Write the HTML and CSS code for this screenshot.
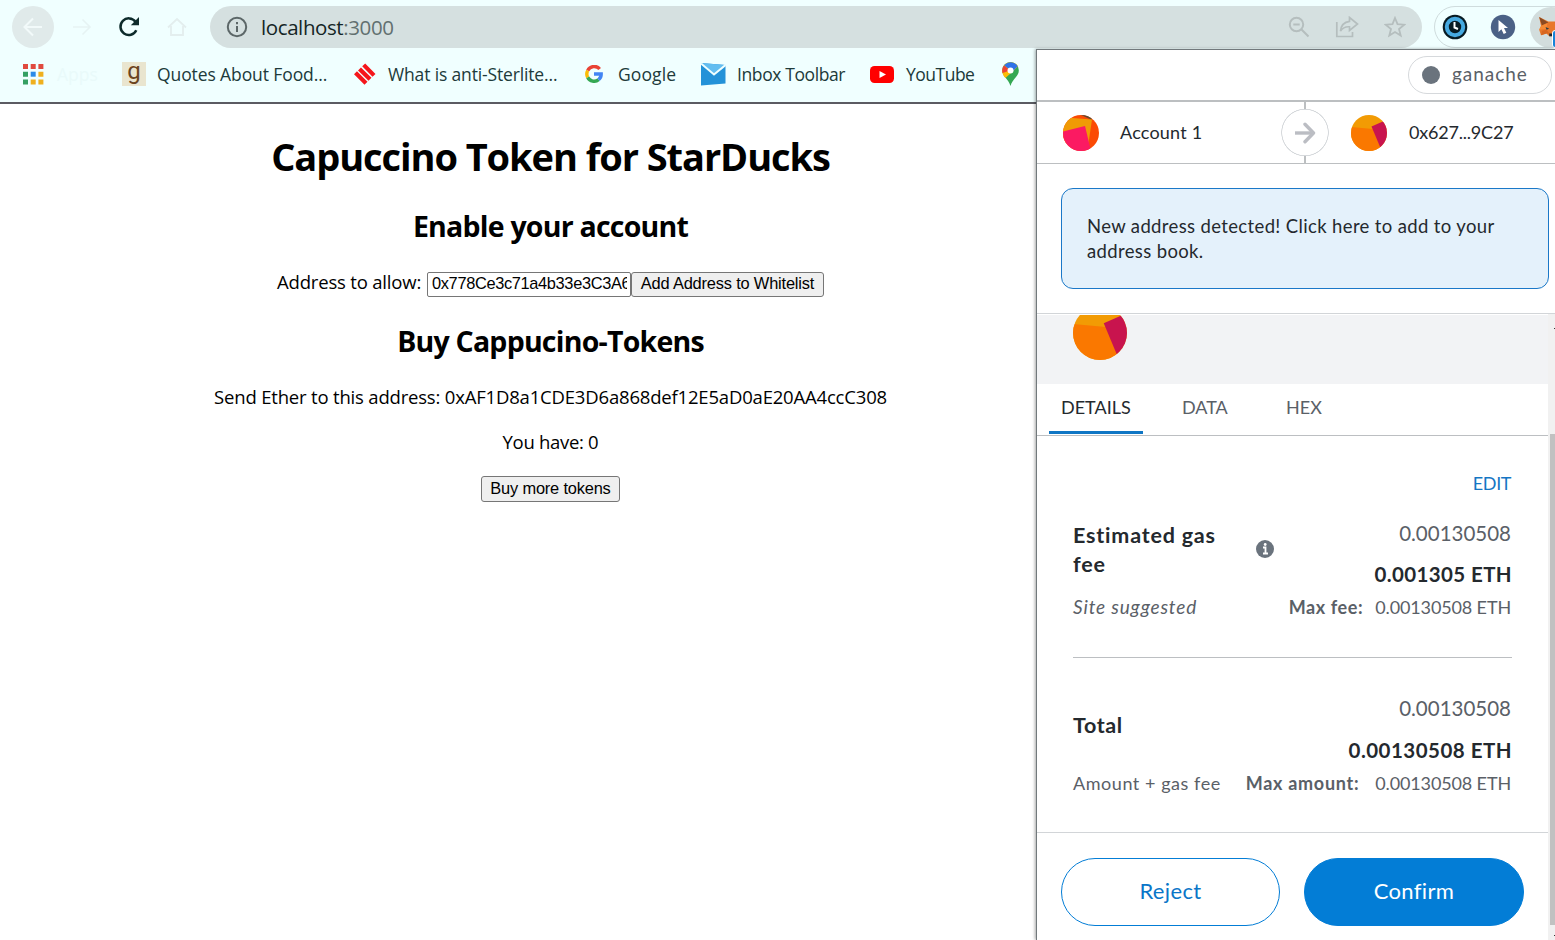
FILE: index.html
```html
<!DOCTYPE html>
<html lang="en">
<head>
<meta charset="utf-8">
<title>Capuccino Token for StarDucks</title>
<link rel="stylesheet" href="styles.css">
</head>
<body>
<div class="window">
  <header class="toolbar">
    <span class="nav-back"><svg width="20" height="20" viewBox="0 0 20 20" fill="none" stroke="#f2fafa" stroke-width="2"><path d="M19 10H2M10 1.500L1.500 10L10 18.500"/></svg></span>
    <svg class="nav-forward" width="20" height="20" viewBox="0 0 20 20" fill="none" stroke="#e6f3f3" stroke-width="1.600"><path d="M1 10H18M10.500 2.500L18 10L10.500 17.500"/></svg>
    <svg class="nav-reload" width="22" height="22" viewBox="0 0 22 22"><path d="M18.300 14.200A8.300 8.300 0 1 1 17.500 5.800" fill="none" stroke="#0d2b2b" stroke-width="2.500"/><path d="M21 1V9.200H12.800Z" fill="#0d2b2b"/></svg>
    <svg class="nav-home" width="20" height="20" viewBox="0 0 20 20" fill="none" stroke="#e3eeee" stroke-width="1.800"><path d="M1 10.500L10 2L19 10.500M4 9V18H16V9"/></svg>
    <div class="omnibox">
      <svg width="22" height="22" viewBox="0 0 22 22"><circle cx="11" cy="11" r="9.200" fill="none" stroke="#5c6768" stroke-width="2"/><path d="M11 10V16M11 6V8.200" stroke="#5c6768" stroke-width="2"/></svg>
      <span class="url">localhost<span class="port">:3000</span></span>
      <div class="omni-actions">
        <svg width="22" height="22" viewBox="0 0 22 22" fill="none" stroke="#b5bebe" stroke-width="2"><circle cx="8.500" cy="8.500" r="6.700"/><path d="M5.300 8.500H11.700M13.500 13.500L20.500 20.500"/></svg>
        <svg width="24" height="22" viewBox="0 0 24 22" fill="none" stroke="#b5bebe" stroke-width="1.700"><path d="M1.800 6V20.500H17.500V16"/><path d="M14.500 1.500L22.500 8L14.500 14.500V10.800C10.500 10.500 7.500 12 5.500 15C6 9.500 9 6 14.500 5.300Z"/></svg>
        <svg width="22" height="22" viewBox="0 0 22 22" fill="none" stroke="#b5bebe" stroke-width="1.800"><path d="M11 2L13.500 8.200L20.200 8.700L15 13L16.700 19.600L11 16L5.300 19.600L7 13L1.800 8.700L8.500 8.200Z"/></svg>
      </div>
    </div>
    <div class="extensions">
      <svg width="26" height="26" viewBox="0 0 26 26"><circle cx="13" cy="13" r="12.300" fill="#071a22"/><circle cx="13" cy="13" r="8.200" fill="#071a22" stroke="#46a9e0" stroke-width="4"/><path d="M12.500 8V13.500L16 15" fill="none" stroke="#fff" stroke-width="2"/></svg>
      <svg width="26" height="26" viewBox="0 0 26 26"><circle cx="13" cy="13" r="12.200" fill="#4b6186"/><path d="M8.500 6L18 14H14L16.300 18.700L13.700 20L11.400 15.300L8.500 18Z" fill="#fff"/></svg>
      <span class="fox"><svg width="28" height="22" viewBox="0 0 30 24"><path d="M1 1L11 6H18L28 1L27 11L28 17L25 21L18 19L16 22H12L9 19L3 21L1 15L3 11Z" fill="#e8772a"/><path d="M1 1L11 7L4 10Z" fill="#8a4a22"/><path d="M28 1L18 7L25 10Z" fill="#8a4a22"/><path d="M3 11L10 8L9 14L1 15Z" fill="#f58a34"/><path d="M8 12L12 14L9 15Z" fill="#263b45"/><path d="M12 19H17L16 22H12Z" fill="#20282e"/><path d="M4 16L9 15L12 19L9 19L3 21Z" fill="#d7661f"/></svg></span>
      <span class="badge"></span>
    </div>
  </header>

  <nav class="bookmarks">
    <svg class="bm-apps" width="21" height="21" viewBox="0 0 21 21"><path d="M0 0H5V5H0ZM7.700 0H12.700V5H7.700ZM15.400 0H20.400V5H15.400Z" fill="#e04a3f"/><path d="M0 7.700H5V12.700H0ZM0 15.400H5V20.400H0Z" fill="#35a063"/><path d="M7.700 7.700H12.700V12.700H7.700Z" fill="#2a8be8"/><path d="M15.400 7.700H20.400V12.700H15.400ZM7.700 15.400H12.700V20.400H7.700ZM15.400 15.400H20.400V20.400H15.400Z" fill="#efb01f"/></svg>
    <span class="bm-text t-apps">Apps</span>
    <span class="goodreads">g</span>
    <span class="bm-text t-quotes">Quotes About Food...</span>
    <svg class="bm-red" width="22" height="22" viewBox="0 0 22 22" fill="none" stroke="#f5161b" stroke-width="4.200"><path d="M9.700 1.900L20 12.400M5.500 5.900L16 16.300M1.500 9.700L12 20.200"/></svg>
    <span class="bm-text t-what">What is anti-Sterlite...</span>
    <svg class="bm-google" width="18" height="18" viewBox="0 0 18 18" fill="none" stroke-width="3.400"><path d="M14.700 4A7.200 7.200 0 0 0 2.700 5.600" stroke="#e94335"/><path d="M2.700 5.600A7.200 7.200 0 0 0 2.700 12.400" stroke="#fbbc05"/><path d="M2.700 12.400A7.200 7.200 0 0 0 13.600 14.700" stroke="#34a853"/><path d="M13.600 14.700A7.200 7.200 0 0 0 16.200 9H9" stroke="#4285f4"/></svg>
    <span class="bm-text t-google">Google</span>
    <svg class="bm-mail" width="25" height="23" viewBox="0 0 25 23"><path d="M0 0L24.500 2V20.500L0 22.500Z" fill="#2492d8"/><path d="M0 0L24.500 2L13 11.500Z" fill="#63bdf0"/><path d="M0 0.500L13 11.500L24.500 2" fill="none" stroke="#f0ffff" stroke-width="2"/></svg>
    <span class="bm-text t-inbox">Inbox Toolbar</span>
    <svg class="bm-tube" width="24" height="17" viewBox="0 0 24 17"><rect width="24" height="17" rx="4.500" fill="#f00"/><path d="M9.500 5L16 8.500L9.500 12Z" fill="#fff"/></svg>
    <span class="bm-text t-tube">YouTube</span>
    <svg class="bm-maps" width="17" height="24" viewBox="0 0 17 24"><path d="M8.500 0A8.300 8.300 0 0 1 16.800 8.500C16.800 14.500 11 16 8.500 24C6 16 0.200 14.500 0.200 8.500A8.300 8.300 0 0 1 8.500 0Z" fill="#34a853"/><path d="M0.200 8.500C0.200 12 1.500 13.800 3.500 16L16 4.500A8.300 8.300 0 0 0 2.200 3.300Z" fill="#fbbc05"/><path d="M2.200 3.300A8.300 8.300 0 0 0 0.600 11L8 8.500Z" fill="#ea4335"/><path d="M2.200 3.300A8.300 8.300 0 0 1 15.800 4.300L9 11L8 8Z" fill="#2f73e8"/><circle cx="8.500" cy="8.500" r="3" fill="#fff"/></svg>
  </nav>

  <main class="page">
    <h1>Capuccino Token for StarDucks</h1>
    <h2 class="h-enable">Enable your account</h2>
    <div class="form-row">
      <label class="form-label" for="addr">Address to allow:</label>
      <input id="addr" class="field" type="text" value="0x778Ce3c71a4b33e3C3A6">
      <button class="btn btn-add">Add Address to Whitelist</button>
    </div>
    <h2 class="h-buy">Buy Cappucino-Tokens</h2>
    <p class="send">Send Ether to this address: 0xAF1D8a1CDE3D6a868def12E5aD0aE20AA4ccC308</p>
    <p class="have">You have: 0</p>
    <button class="btn btn-buy">Buy more tokens</button>
  </main>

  <aside class="popup">
    <div class="network-bar"><div class="network"><span class="dot"></span><span class="t-gan">ganache</span></div></div>
    <div class="accounts">
      <div class="sender">
        <svg width="36" height="36" viewBox="0 0 36 36"><defs><clipPath id="c1"><circle cx="18" cy="18" r="18"/></clipPath></defs><g clip-path="url(#c1)"><path d="M0 0H36V36H0Z" fill="#fb4a04"/><path d="M18 0H28L29 5Z" fill="#5c4a35"/><path d="M0 3H9L29 4.500L25.500 28H0Z" fill="#f09a05"/><path d="M0 16.500L22 11L28 36H0Z" fill="#fb1a62"/></g></svg>
        <span class="t-acc">Account 1</span>
      </div>
      <span class="arrow"><svg width="22" height="22" viewBox="0 0 22 22" fill="none" stroke="#bbbdc3" stroke-width="3.400"><path d="M1 11H19" /><path d="M11 2.200L19.500 11L11 19.800" stroke-linecap="round" stroke-linejoin="round"/></svg></span>
      <div class="recipient">
        <svg width="36" height="36" viewBox="0 0 36 36"><defs><clipPath id="c2"><circle cx="18" cy="18" r="18"/></clipPath></defs><g clip-path="url(#c2)"><path d="M0 0H36V36H0Z" fill="#f29b04"/><path d="M0 12L22 14L32 36H0Z" fill="#fa7800"/><path d="M20.500 11.500L33 6H36V33H29.500Z" fill="#c8144e"/></g></svg>
        <span class="t-rec">0x627...9C27</span>
      </div>
    </div>
    <div class="alert-wrap"><div class="alert">New address detected! Click here to add to your<br>address book.</div></div>
    <div class="scroll-area">
      <div class="content">
        <div class="summary"><svg width="54" height="54" viewBox="0 0 36 36"><g clip-path="url(#c2)"><path d="M0 0H36V36H0Z" fill="#f29b04"/><path d="M0 12L22 14L32 36H0Z" fill="#fa7800"/><path d="M20.500 11.500L33 6H36V33H29.500Z" fill="#c8144e"/></g></svg></div>
        <div class="tabs"><span class="tab active">DETAILS</span><span class="tab tab-data">DATA</span><span class="tab tab-hex">HEX</span></div>
        <div class="details">
          <div class="edit">EDIT</div>
          <div class="fee">
            <div class="fee-title"><span class="bold b-est">Estimated gas<br>fee</span><svg width="18" height="18" viewBox="0 0 18 18"><circle cx="9" cy="9" r="9" fill="#6a737d"/><path d="M7 7.500H9.500V13M7 13.500H12" fill="none" stroke="#fff" stroke-width="1.800"/><circle cx="9.200" cy="4.500" r="1.400" fill="#fff"/></svg></div>
            <div class="amounts"><span class="amt">0.00130508</span><span class="bold b-fee">0.001305 ETH</span></div>
          </div>
          <div class="note"><em>Site suggested</em><span class="max"><b class="t-mf">Max fee:</b><span class="t-mv">0.00130508 ETH</span></span></div>
          <div class="rule"></div>
          <div class="fee total">
            <div class="fee-title"><span class="bold b-total">Total</span></div>
            <div class="amounts"><span class="amt">0.00130508</span><span class="bold b-tot">0.00130508 ETH</span></div>
          </div>
          <div class="note"><span class="t-agf">Amount + gas fee</span><span class="max max-total"><b class="t-ma">Max amount:</b><span class="t-mv">0.00130508 ETH</span></span></div>
        </div>
        <footer class="actions"><button class="pill reject">Reject</button><button class="pill confirm">Confirm</button></footer>
      </div>
      <div class="scrollbar"><span class="tick"></span><span class="thumb"></span><span class="tick tick-end"></span></div>
    </div>
  </aside>
</div>
</body>
</html>
```

FILE: styles.css
```css
* { box-sizing: border-box; }
body { margin: 0; background: #fff; }
.window {
  position: relative;
  width: 1555px;
  height: 940px;
  overflow: hidden;
  font-family: "Open Sans", "Noto Sans", sans-serif;
  white-space: nowrap;
}
svg { display: block; flex: none; }

/* browser toolbar */
.toolbar { display: flex; align-items: center; height: 54px; padding-left: 12px; background: #f0ffff; }
.nav-back { display: grid; place-items: center; width: 42px; height: 42px; border-radius: 50%; background: #e0eaea; flex: none; }
.nav-forward { margin-left: 18px; }
.nav-reload { margin-left: 26px; }
.nav-home { margin-left: 27px; }
.omnibox { display: flex; align-items: center; width: 1212px; height: 42px; margin-left: 23px; padding: 0 16px; border-radius: 21px; background: #d5e0e0; flex: none; }
.url { margin-left: 13px; font-size: 20.5px; letter-spacing: -0.4px; color: #142525; }
.port { color: #627070; }
.omni-actions { display: flex; gap: 25px; margin-left: auto; }
.extensions { position: relative; display: flex; align-items: center; width: 140px; height: 42px; margin-left: 12px; padding-left: 7px; border: 1px solid #cfdcdd; border-radius: 21px 0 0 21px; gap: 22px; flex: none; }
.fox { display: flex; align-items: center; width: 42px; height: 41px; margin-left: -8px; padding-left: 8px; border-radius: 50%; background: #d2dddd; flex: none; }
.badge { position: absolute; left: 117px; top: 23px; width: 12px; height: 18px; border: 1px solid #fff; border-radius: 3px; background: #1684d8; }

/* bookmarks */
.bookmarks { display: flex; align-items: center; height: 50px; padding: 0 0 8px 23px; border-bottom: 2px solid #5b5b62; background: #f0ffff; }
.bm-text { font-size: 17.5px; color: #203a3a; flex: none; }
.t-apps { width: 65px; margin-left: 13px; color: #e9fafa; }
.goodreads { width: 24px; height: 24px; background: #e9e5cf; color: #6b4420; text-align: center; font: 24px/18px Roboto, sans-serif; }
.t-quotes { width: 171px; margin-left: 11px; letter-spacing: -0.1px; }
.bm-red { margin-left: 26px; }
.t-what { width: 170px; margin-left: 12px; letter-spacing: -0.15px; }
.bm-google { margin-left: 27px; }
.t-google { width: 58px; margin-left: 15px; letter-spacing: 0.1px; }
.bm-mail { margin-left: 25px; }
.t-inbox { width: 109px; margin-left: 11px; letter-spacing: -0.4px; }
.bm-tube { margin-left: 24px; }
.t-tube { width: 69px; margin-left: 12px; letter-spacing: -0.5px; }
.bm-maps { margin-left: 27px; }

/* token sale page */
.page { display: flex; flex-direction: column; align-items: center; width: 1101px; padding-top: 26px; color: #000; }
h1, h2, p { margin: 0; }
h1 { font-size: 38px; line-height: 52px; letter-spacing: -1.07px; }
h2 { font-size: 28.5px; line-height: 38px; letter-spacing: -0.77px; }
.h-enable { margin-top: 25px; }
.h-buy { margin-top: 25px; }
.form-row { display: flex; height: 25px; margin-top: 27px; }
.form-label { width: 150px; font-size: 18.5px; line-height: 19px; letter-spacing: -0.18px; }
.field { width: 204px; height: 25px; padding: 0 3px 2px 4px; border: 1px solid #767676; border-radius: 2px; font: 16.4px "Liberation Sans", Arial, sans-serif; letter-spacing: -0.35px; color: #000; }
.btn { padding: 0 0 2px; border: 1px solid #767676; border-radius: 3px; background: #efefef; color: #000; font: 16.4px "Liberation Sans", Arial, sans-serif; letter-spacing: -0.18px; }
.btn-add { width: 193px; }
.send, .have { font-size: 18.5px; line-height: 23px; letter-spacing: -0.185px; }
.send { margin-top: 25px; }
.have { margin-top: 22px; letter-spacing: -0.3px; }
.btn-buy { width: 139px; height: 26px; margin-top: 23px; }

/* wallet popup */
.popup { position: absolute; left: 1036px; top: 49px; width: 519px; height: 891px; border-top: 1px solid #72797c; border-left: 1px solid #72797c; background: #fff; box-shadow: -1px 0 3px rgba(0, 0, 0, 0.35); font-family: Lato, sans-serif; color: #24292e; }
.network-bar { display: flex; justify-content: flex-end; height: 52px; padding: 6px 3px 0 0; border-bottom: 2px solid #bcbfc1; }
.network { display: flex; align-items: center; width: 144px; height: 38px; padding-left: 13px; border: 1px solid #d6d9dc; border-radius: 19px; color: #5a6067; font-size: 19px; letter-spacing: 0.95px; gap: 12px; }
.t-gan { padding-bottom: 3px; }
.dot { width: 18px; height: 18px; border-radius: 50%; background: #6a737d; }
.accounts { display: grid; grid-template-columns: 244px 48px 1fr; align-items: center; height: 62px; border-bottom: 1px solid #bcbfc1; font-size: 18px; }
.sender, .recipient { display: flex; align-items: center; }
.sender { padding-left: 26px; gap: 21px; }
.recipient { padding-left: 22px; gap: 22px; }
.t-acc { padding-bottom: 2px; letter-spacing: 0.2px; }
.t-rec { padding-bottom: 2px; letter-spacing: -0.2px; }
.arrow { display: grid; place-items: center; height: 61px; background: radial-gradient(circle at 24px 30.5px, #fff 22.5px, #d6d9dc 23px, #d6d9dc 23.5px, transparent 24px), linear-gradient(90deg, transparent 23px, #bcbfc1 23px, #bcbfc1 25px, transparent 25px); }
.alert-wrap { height: 150px; padding: 24px 6px 0 24px; border-bottom: 1px solid #d2d5d8; }
.alert { height: 101px; padding: 25px; border: 1px solid #1a78c8; border-radius: 12px; background: #e4f1fb; font-size: 18.5px; line-height: 25px; letter-spacing: 0.36px; }
.scroll-area { display: grid; grid-template-columns: 511px 7px; height: 626px; }
.summary { display: flex; align-items: flex-end; height: 70px; padding: 0 0 24px 36px; border-top: 1px solid #fff; background: #f2f3f5; overflow: hidden; }
.tabs { display: flex; height: 52px; padding-left: 12px; border-bottom: 1px solid #bcbfc2; font-size: 18px; line-height: 46px; color: #5a6067; }
.active { width: 94px; height: 50px; padding-left: 12px; border-bottom: 3px solid #0f76c4; color: #24292e; }
.tab-data { margin-left: 39px; width: 46px; }
.tab-hex { margin-left: 58px; }
.details { height: 397px; padding: 34px 36px 0 36px; border-bottom: 1px solid #d2d5d8; color: #5a6067; }
.edit { height: 27px; padding-right: 1px; text-align: right; font-size: 18px; line-height: 26px; letter-spacing: -0.4px; color: #1476c4; }
.fee { display: flex; justify-content: space-between; height: 93px; padding-top: 21px; }
.fee-title { display: flex; justify-content: space-between; width: 201px; height: 61px; padding-top: 3px; line-height: 29px; }
.fee-title svg { margin-top: 19px; }
.bold { font-size: 20.5px; font-weight: 700; color: #24292e; }
.b-est { font-size: 21.5px; letter-spacing: 0.8px; }
.b-total { font-size: 21.5px; letter-spacing: 0.6px; }
.b-fee { letter-spacing: 0.38px; }
.b-tot { letter-spacing: 0.48px; }
.amounts { display: flex; flex-direction: column; align-items: flex-end; line-height: 30px; gap: 11px; }
.amt { padding-right: 1px; font-size: 20.5px; }
.note { display: flex; justify-content: space-between; height: 38px; padding-top: 4px; font-size: 18px; line-height: 26px; }
.note em { font-size: 19px; letter-spacing: 0.85px; }
.t-mf { letter-spacing: 0.6px; }
.t-mv { padding-right: 1px; letter-spacing: -0.13px; }
.t-agf { letter-spacing: 0.55px; }
.t-ma { letter-spacing: 0.7px; }
.max { display: flex; gap: 12px; }
.max-total { gap: 16px; }
.rule { height: 1px; margin-top: 29px; background: #bcbfc2; }
.total { height: 95px; padding-top: 35px; }
.total .fee-title { padding-top: 18px; }
.total .amounts { gap: 12px; }
.total + .note { padding-top: 17px; }
.actions { display: flex; padding: 25px 0 0 24px; gap: 24px; }
.pill { width: 220px; height: 68px; padding: 0 0 3px; border: 1px solid #037dd6; border-radius: 34px; font: 22px Lato, sans-serif; letter-spacing: 0.35px; flex: none; }
.reject { background: #fff; color: #0a76c8; width: 219px; }
.confirm { background: #037dd6; color: #fff; }
.scrollbar { display: flex; flex-direction: column; align-items: flex-end; height: 626px; background: #f1f1f1; }
.thumb { width: 5px; height: 491px; margin-top: 105px; background: #c1c1c1; }
.tick { width: 1px; height: 1px; margin-top: 14px; background: #333; }
.tick-end { margin-top: 10px; }
```
